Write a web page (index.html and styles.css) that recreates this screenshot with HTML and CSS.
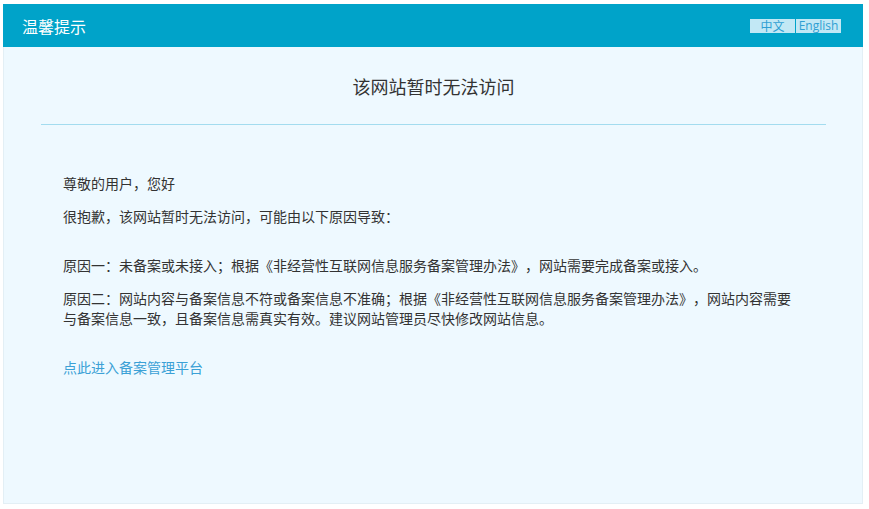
FILE: index.html
```html
<!DOCTYPE html>
<html>
<head>
<meta charset="UTF-8">
<title>温馨提示</title>
<link rel="stylesheet" href="styles.css">
</head>
<body>
<div class="box">
	<div class="head">
		<span class="head_title">温馨提示</span>
		<div class="lang">
			<a class="lang_link" href="#">中文</a>
			<a class="lang_link en" href="#">English</a>
		</div>
	</div>

	<div class="main">
		<h2 class="title">该网站暂时无法访问</h2>
		<div class="content">
			<p>尊敬的用户，您好</p>
			<p>很抱歉，该网站暂时无法访问，可能由以下原因导致：</p>
			<p class="gap">原因一：未备案或未接入；根据《非经营性互联网信息服务备案管理办法》，网站需要完成备案或接入。</p>
			<p>原因二：网站内容与备案信息不符或备案信息不准确；根据《非经营性互联网信息服务备案管理办法》，网站内容需要与备案信息一致，且备案信息需真实有效。建议网站管理员尽快修改网站信息。</p>
			<p class="gap"><a class="link" href="#">点此进入备案管理平台</a></p>
		</div>
	</div>
</div>
</body>
</html>
```

FILE: styles.css
```css
*{
	margin:0;
	padding:0;
}
body{
	background-color:#fff;
	font-family:"Noto Sans CJK SC", "Liberation Sans", sans-serif;
	color:#333;
	text-spacing-trim:space-all;
}
.box{
	width:858px;
	height:499px;
	margin:4px 0 0 3px;
	background-color:#eef9ff;
	border:1px solid #e3eff5;
	border-top:none;
}
.head{
	height:43px;
	margin:0 -1px;
	background-color:#00a3c9;
	display:flex;
	justify-content:space-between;
	align-items:center;
	padding:0 22px 0 19px;
}
.head_title{
	color:#fff;
	font-size:16px;
	line-height:20px;
}
.lang{
	display:flex;
	gap:1px;
	margin-top:1px;
}
.lang_link{
	display:block;
	width:45px;
	height:14px;
	line-height:14px;
	font-size:12px;
	text-align:center;
	text-decoration:none;
	color:#2f9fd3;
	background-color:#c2e8f5;
}
.lang_link.en{
	font-family:"Open Sans", sans-serif;
}
.title{
	font-weight:normal;
	font-size:18px;
	line-height:24px;
	text-align:center;
	padding:27px 0 26px;
	margin:0 36px 0 37px;
	border-bottom:1px solid #a3dcef;
}
.content{
	padding:48px 60px 0 59px;
	font-size:14px;
	line-height:20px;
}
.content p{
	margin-bottom:13px;
}
.content p.gap{
	margin-top:29px;
}
.link{
	color:#3ba1d6;
	text-decoration:none;
}
```
